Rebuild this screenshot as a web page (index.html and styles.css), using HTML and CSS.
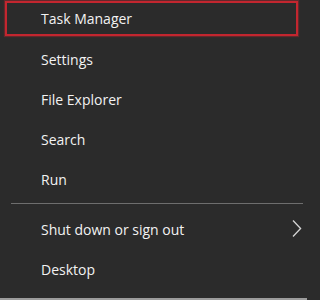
FILE: index.html
```html
<!DOCTYPE html>
<html>
<head>
<meta charset="utf-8">
<link rel="stylesheet" href="styles.css">
</head>
<body>
<div class="menu">
  <div class="item selected">Task Manager</div>
  <div class="item">Settings</div>
  <div class="item">File Explorer</div>
  <div class="item">Search</div>
  <div class="item">Run</div>
  <div class="sep"></div>
  <div class="item sub"><span>Shut down or sign out</span>
    <svg class="chev" width="10" height="19" viewBox="0 0 10 19"><path d="M1 1.5 L8.6 9.5 L1 17.5" fill="none" stroke="#d4d4d4" stroke-width="1.3"/></svg>
  </div>
  <div class="item">Desktop</div>
</div>
</body>
</html>
```
FILE: styles.css
```css
html, body {
  margin: 0;
  padding: 0;
  background: #2b2b2b;
}
.menu {
  width: 307px;
  height: 298px;
  background: #2b2b2b;
  border-bottom: 2px solid #9c9c9c;
  font-family: "Open Sans", "Noto Sans", sans-serif;
  font-size: 14px;
  color: #f2f2f2;
  display: flex;
  flex-direction: column;
}
.item {
  height: 40px;
  padding-left: 41px;
  display: flex;
  align-items: center;
  box-sizing: border-box;
  flex-shrink: 0;
}
.item.selected {
  height: 35px;
  margin: 1px 9px 3px 5px;
  padding-left: 34px;
  padding-bottom: 1px;
  border: 2px solid #c3262f;
  box-shadow: 0 0 1px 1px rgba(195, 38, 47, 0.35);
}
.sep {
  height: 1px;
  background: #6e6e6e;
  margin: 4px 4px 5px 11px;
  flex-shrink: 0;
}
.item.sub {
  justify-content: space-between;
  padding-right: 5px;
}
.chev {
  display: block;
  margin-top: -2px;
}
```
